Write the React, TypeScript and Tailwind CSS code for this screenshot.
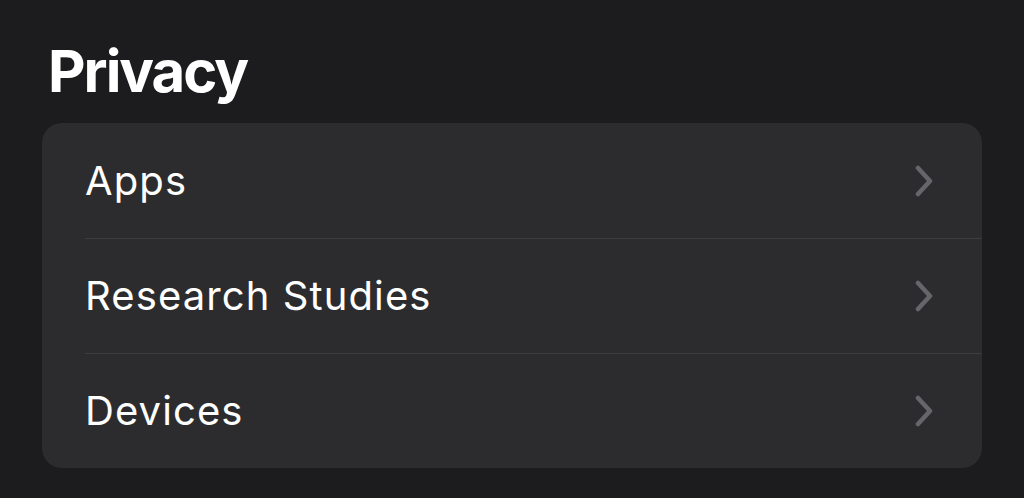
import React from 'react'

const rows = ['Apps', 'Research Studies', 'Devices']

function Chevron() {
  return (
    <svg width="20" height="32" viewBox="0 0 20 32" fill="none" className="shrink-0">
      <path d="M4 3 L16 16 L4 29" stroke="#66666a" strokeWidth="4.5" strokeLinecap="round" strokeLinejoin="round" />
    </svg>
  )
}

export default function App() {
  return (
    <div className="w-[1024px] h-[498px] bg-[#1c1c1e] overflow-hidden" style={{ fontFamily: 'Inter, "Noto Sans", sans-serif' }}>
      <h1 className="pl-[48px] pt-[37px] h-[123px] text-[58px] leading-[68px] font-bold text-white tracking-[-2px]">Privacy</h1>
      <div className="ml-[42px] w-[940px] rounded-[20px] bg-[#2c2c2e] overflow-hidden">
        {rows.map((label, i) => (
          <div
            key={label}
            className={`ml-[43px] h-[115px] flex items-center justify-between pr-[48px] ${i > 0 ? 'border-t border-[#3e3e41]' : ''}`}
          >
            <span className="text-[40px] text-white tracking-[1.1px]">{label}</span>
            <Chevron />
          </div>
        ))}
      </div>
    </div>
  )
}
